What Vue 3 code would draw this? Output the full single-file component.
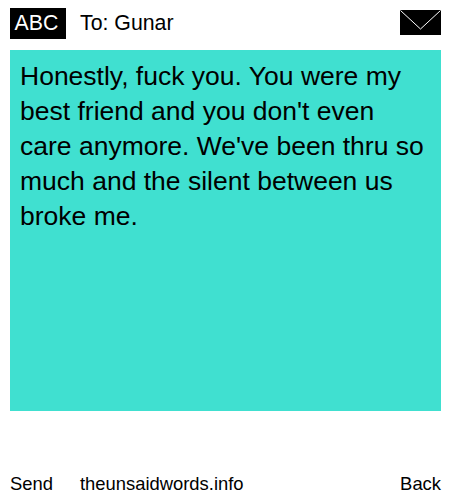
<script setup>
const message = "Honestly, fuck you. You were my best friend and you don't even care anymore. We've been thru so much and the silent between us broke me."
</script>
<template>
  <div class="phone">
    <div class="top-bar">
      <span class="mode">ABC</span>
      <span class="to">To: Gunar</span>
      <svg class="envelope" viewBox="0 0 41 25" width="41" height="25">
        <rect width="41" height="25" fill="#000" />
        <path d="M0.5 0.5 L20.5 19 L40.5 0.5" fill="none" stroke="#fff" stroke-width="1" />
      </svg>
    </div>
    <div class="message">{{ message }}</div>
    <div class="bottom-bar">
      <span class="send">Send</span>
      <span class="site">theunsaidwords.info</span>
      <span class="back">Back</span>
    </div>
  </div>
</template>
<style>
body {
  background: #fff;
}
</style>
<style scoped>
.phone {
  width: 450px;
  height: 500px;
  box-sizing: border-box;
  padding: 8px 9px 0 10px;
  display: flex;
  flex-direction: column;
  font-family: "Liberation Sans", Arial, sans-serif;
  color: #000;
}

.top-bar {
  display: flex;
  align-items: flex-start;
  height: 42px;
}

.mode {
  width: 56px;
  height: 31px;
  box-sizing: border-box;
  padding-right: 3px;
  line-height: 30px;
  text-align: center;
  background: #000;
  color: #fff;
  font-size: 21.3px;
}

.to {
  margin-left: 14px;
  font-size: 21.3px;
  line-height: 31px;
}

.envelope {
  margin-left: auto;
  margin-top: 2px;
}

.message {
  height: 361px;
  box-sizing: border-box;
  padding: 9px 10px;
  background: #40e0d0;
  font-size: 26.5px;
  line-height: 35px;
}

.bottom-bar {
  display: flex;
  margin-top: 62px;
  font-size: 18.4px;
  line-height: 21px;
}

.site {
  margin-left: 27px;
}

.back {
  margin-left: auto;
}
</style>
